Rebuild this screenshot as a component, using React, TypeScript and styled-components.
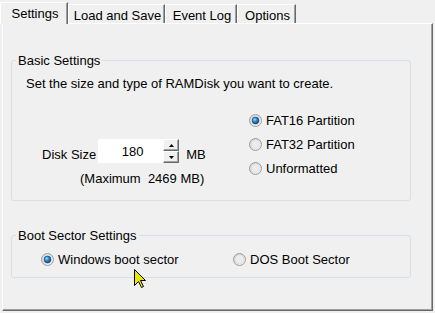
import styled, { createGlobalStyle } from 'styled-components';

const Global = createGlobalStyle`
  html, body { margin: 0; background: #f0f0f0; overflow: hidden; }
  body { font-family: "Liberation Sans", Arial, sans-serif; font-size: 13px; color: #000; }
`;

// ---------- tabs ----------
const Frame = styled.div`position: relative; width: 435px; height: 313px; padding-top: 2px; box-sizing: border-box;`;
const TabStrip = styled.div`display: flex; align-items: flex-end; height: 21px;`;
const Tab = styled.div<{ $w: number; $active?: boolean }>`
  box-sizing: border-box;
  width: ${({ $w }) => $w}px;
  height: ${({ $active }) => ($active ? 22 : 19)}px;
  margin-bottom: ${({ $active }) => ($active ? -1 : 0)}px;
  position: relative;
  z-index: ${({ $active }) => ($active ? 1 : 0)};
  padding: 3px 0 0 2px;
  line-height: 15px;
  text-align: center;
  white-space: nowrap;
  background: #f0f0f0;
  border-top: 1px solid #fff;
  border-left: 1px solid #fff;
  border-right: 1px solid #696969;
  box-shadow: inset -1px 0 0 #a0a0a0;
`;
const Panel = styled.div`
  box-sizing: border-box;
  margin-left: 2px;
  width: 431px;
  height: 288px;
  padding: 29px 0 0 8px;
  border-top: 1px solid #fff;
  border-left: 1px solid #fff;
  border-right: 1px solid #696969;
  border-bottom: 1px solid #696969;
  box-shadow: inset -1px -1px 0 #a0a0a0;
  display: flex;
  flex-direction: column;
  gap: 27px;
`;

// ---------- group boxes ----------
const GroupBox = styled.fieldset<{ $pt: number; $pb: number }>`
  box-sizing: border-box;
  width: 400px;
  margin: 0;
  padding: ${({ $pt }) => $pt}px 14px ${({ $pb }) => $pb}px 14px;
  border: 1px solid #d5dfe5;
  border-radius: 3px;
  min-width: 0;
`;
const GroupTitle = styled.legend`
  padding: 0 2px;
  margin-left: -10px;
  line-height: 15px;
  font-size: 13px;
`;
const Description = styled.div`line-height: 15px;`;
const OptionsGrid = styled.div`
  display: grid;
  grid-template-columns: 223px 1fr;
  margin-top: 17px;
`;
const SizeColumn = styled.div`display: flex; flex-direction: column; padding-top: 31px;`;
const SizeRow = styled.div`display: flex; align-items: flex-start; margin-left: 16px;`;
const FieldLabel = styled.span<{ $ml?: number }>`
  line-height: 15px;
  margin-top: 8px;
  margin-left: ${({ $ml }) => $ml ?? 0}px;
  white-space: nowrap;
`;
const NumberBox = styled.input`
  box-sizing: border-box;
  width: 65px;
  height: 24px;
  margin-left: 2px;
  padding: 0 0 0 4px;
  border: none;
  outline: none;
  background: #fff;
  font: 13px/15px "Liberation Sans", Arial, sans-serif;
  color: #000;
  text-align: center;
`;
const Spinner = styled.div`display: flex; flex-direction: column; width: 16px;`;
const SpinButton = styled.div`
  box-sizing: border-box;
  height: 12px;
  display: flex;
  align-items: center;
  justify-content: center;
  background: #f0f0f0;
  border-top: 1px solid #fff;
  border-left: 1px solid #fff;
  border-right: 1px solid #696969;
  border-bottom: 1px solid #696969;
  box-shadow: inset -1px -1px 0 #a0a0a0;
`;
const Hint = styled.div`line-height: 15px; margin: 8px 0 0 54px; white-space: pre;`;
const RadioList = styled.div`display: flex; flex-direction: column;`;
const RadioItem = styled.label<{ $w?: number }>`
  display: flex;
  align-items: center;
  gap: 4px;
  height: 24px;
  line-height: 15px;
  white-space: nowrap;
  ${({ $w }) => ($w ? `width: ${$w}px;` : '')}
`;
const BootRow = styled.div`display: flex; margin-left: 15px;`;
const Cursor = styled.svg`position: absolute; left: 134px; top: 269px;`;

function Radio({ checked }: { checked?: boolean }) {
  return (
    <svg width="13" height="13" viewBox="0 0 13 13">
      <defs>
        <linearGradient id="ring" x1="0" y1="0" x2="1" y2="1">
          <stop offset="0" stopColor="#cfcfcf" />
          <stop offset="1" stopColor="#fbfbfb" />
        </linearGradient>
        <radialGradient id="dot" cx="0.38" cy="0.35" r="0.7">
          <stop offset="0" stopColor="#a8dcff" />
          <stop offset="0.45" stopColor="#2c87d3" />
          <stop offset="1" stopColor="#0c4a80" />
        </radialGradient>
      </defs>
      <circle cx="6.5" cy="6.5" r="6" fill="url(#ring)" stroke="#9a9c9e" />
      <circle cx="6.5" cy="6.5" r="4.4" fill="#ececec" stroke="#d6d6d6" strokeWidth="0.6" />
      {checked && <circle cx="6.5" cy="6.5" r="3.4" fill="url(#dot)" stroke="#0b3a66" strokeWidth="0.6" />}
    </svg>
  );
}

const Arrow = ({ up }: { up?: boolean }) => (
  <svg width="5" height="3" viewBox="0 0 5 3">
    <path d={up ? 'M2.5 0 L5 3 L0 3 Z' : 'M0 0 L5 0 L2.5 3 Z'} fill="#000" />
  </svg>
);

export default function App() {
  return (
    <Frame>
      <Global />
      <TabStrip>
        <Tab $w={68} $active>Settings</Tab>
        <Tab $w={97}>Load and Save</Tab>
        <Tab $w={72}>Event Log</Tab>
        <Tab $w={59}>Options</Tab>
      </TabStrip>
      <Panel>
        <GroupBox $pt={8} $pb={14}>
          <GroupTitle>Basic Settings</GroupTitle>
          <Description>Set the size and type of RAMDisk you want to create.</Description>
          <OptionsGrid>
            <SizeColumn>
              <SizeRow>
                <FieldLabel>Disk Size</FieldLabel>
                <NumberBox readOnly value="180" />
                <Spinner>
                  <SpinButton><Arrow up /></SpinButton>
                  <SpinButton><Arrow /></SpinButton>
                </Spinner>
                <FieldLabel $ml={7}>MB</FieldLabel>
              </SizeRow>
              <Hint>(Maximum  2469 MB)</Hint>
            </SizeColumn>
            <RadioList>
              <RadioItem><Radio checked />FAT16 Partition</RadioItem>
              <RadioItem><Radio />FAT32 Partition</RadioItem>
              <RadioItem><Radio />Unformatted</RadioItem>
            </RadioList>
          </OptionsGrid>
        </GroupBox>
        <GroupBox $pt={4} $pb={6}>
          <GroupTitle>Boot Sector Settings</GroupTitle>
          <BootRow>
            <RadioItem $w={192}><Radio checked />Windows boot sector</RadioItem>
            <RadioItem><Radio />DOS Boot Sector</RadioItem>
          </BootRow>
        </GroupBox>
      </Panel>
      <Cursor width="13" height="20" viewBox="0 0 13 20">
        <path d="M0.5 0.5 L0.5 16.5 L4.5 12.5 L7.5 18.5 L9.5 17.5 L6.5 11.5 L11.5 11.5 Z" fill="#e8e800" stroke="#000" strokeWidth="1" />
      </Cursor>
    </Frame>
  );
}
